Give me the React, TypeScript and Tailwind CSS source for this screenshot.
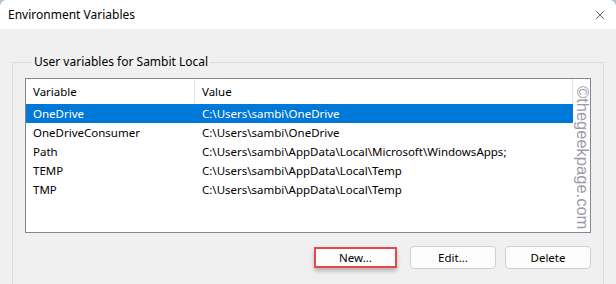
import { X } from 'lucide-react';

const rows = [
  { name: 'OneDrive', value: 'C:\\Users\\sambi\\OneDrive' },
  { name: 'OneDriveConsumer', value: 'C:\\Users\\sambi\\OneDrive' },
  { name: 'Path', value: 'C:\\Users\\sambi\\AppData\\Local\\Microsoft\\WindowsApps;' },
  { name: 'TEMP', value: 'C:\\Users\\sambi\\AppData\\Local\\Temp' },
  { name: 'TMP', value: 'C:\\Users\\sambi\\AppData\\Local\\Temp' },
];

export default function App() {
  return (
    <div className="w-[616px] h-[284px] overflow-hidden bg-[#b9c4d0] font-['Noto_Sans','Liberation_Sans',sans-serif] text-[11.5px] text-black">
      <div className="h-full rounded-t-[7px] bg-[#f0f0f0] flex flex-col overflow-hidden">
        {/* Title bar */}
        <div className="h-[29px] shrink-0 bg-white flex items-center justify-between pl-[8px] pr-[9px]">
          <span className="text-[12px] leading-none">Environment Variables</span>
          <X size={14} strokeWidth={1.2} className="text-[#1a1a1a]" />
        </div>

        {/* Group box */}
        <div className="pl-[12px] pr-[12px] pt-[26px]">
          <fieldset className="border border-[#dcdcdc] px-[12px] pt-[9px] pb-[20px]">
            <legend className="ml-[7px] px-[2px] leading-[14px] text-[12px]">User variables for Sambit Local</legend>

            {/* List */}
            <div className="relative h-[155px] bg-white border border-[#828790]">
              <div className="flex h-[25px] items-center">
                <div className="w-[169px] h-full flex items-center pl-[7px] border-r border-[#e5e5e5]">Variable</div>
                <div className="w-[378px] h-full flex items-center pl-[7px] border-r border-[#e5e5e5]">Value</div>
              </div>
              {rows.map((r, i) => (
                <div
                  key={r.name}
                  className={`flex h-[19px] w-[547px] items-center ${i === 0 ? 'bg-[#0078d7] text-white' : ''}`}
                >
                  <div className="w-[169px] pl-[7px] whitespace-nowrap">{r.name}</div>
                  <div className="pl-[7px] whitespace-nowrap">{r.value}</div>
                </div>
              ))}

              {/* watermark */}
              <div className="absolute right-[-1px] top-[7px] [writing-mode:vertical-rl] [text-orientation:sideways] text-[16.5px] leading-none text-[#9a9aa8] font-['Liberation_Sans',sans-serif]">
                ©thegeekpage.com
              </div>
            </div>

            {/* Buttons */}
            <div className="flex justify-end gap-[9px] mt-[14px]">
              <button className="w-[83px] h-[21px] bg-[#fdfdfd] border-2 border-[#e9464c] shadow-[0_3px_4px_rgba(0,0,0,0.25)] flex items-center justify-center mr-[4px]">
                New...
              </button>
              <button className="w-[86px] h-[23px] -mt-[1px] rounded-[4px] bg-[#fdfdfd] border border-[#d0d0d0] flex items-center justify-center">
                Edit...
              </button>
              <button className="w-[86px] h-[23px] -mt-[1px] rounded-[4px] bg-[#fdfdfd] border border-[#d0d0d0] flex items-center justify-center">
                Delete
              </button>
            </div>
          </fieldset>
        </div>
      </div>
    </div>
  );
}
